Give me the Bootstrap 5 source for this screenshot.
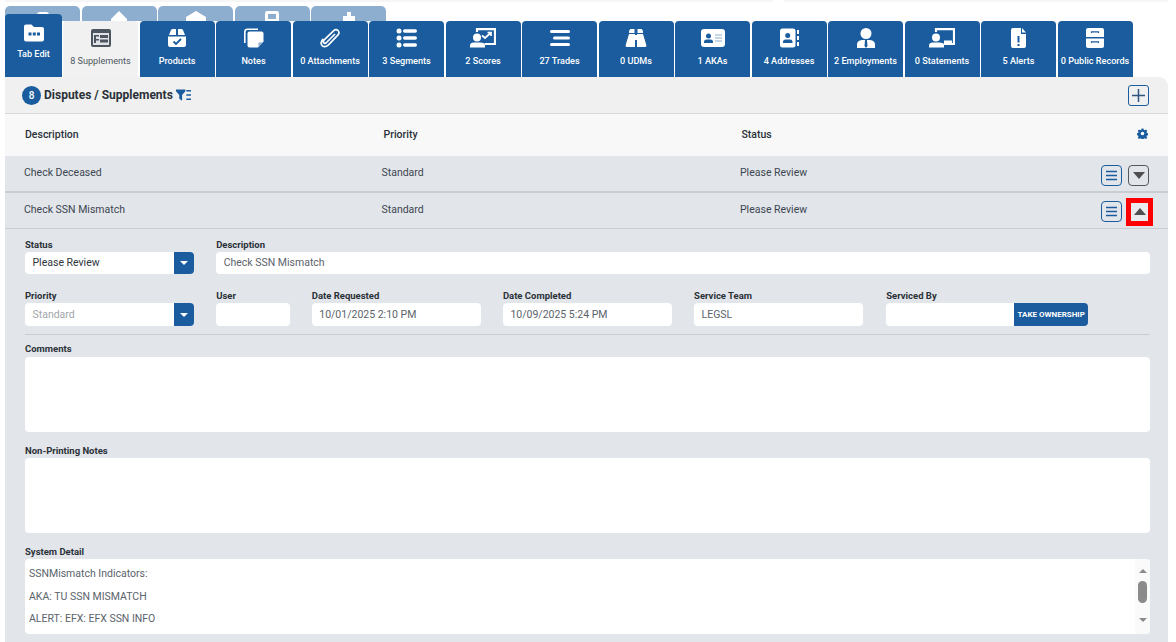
<!DOCTYPE html>
<html lang="en"><head><meta charset="utf-8"><title>Disputes / Supplements</title>
<link href="https://cdn.jsdelivr.net/npm/bootstrap@5.3.0/dist/css/bootstrap.min.css" rel="stylesheet">
<style>
html,body{height:642px;overflow:hidden;background:#fff}
body{font-family:Roboto,"Liberation Sans",sans-serif;font-size:10.5px;color:#3c4650}
.topstrip{height:2px;margin:0 8px 4px 5px;background:linear-gradient(90deg,#f6f6f6 0 66%,#fff 66% 67%,#f6f6f6 67%)}
.backrow{display:flex;gap:1.5px;height:15px;margin-left:5px;overflow:hidden}
.backtab{width:75px;height:30px;background:#8eaecf;border-radius:5px 5px 0 0;display:flex;justify-content:center}
.backtab svg{margin-top:5px;width:20px;height:20px;fill:#fff}
.tabrow{display:flex;gap:1.5px;height:56px;margin-left:5px;align-items:flex-end}
.tabx{width:75px;height:56px;background:#1a5c9e;border-radius:4px 4px 0 0;color:#fff;font-weight:500;font-size:9.1px;line-height:12px;display:flex;flex-direction:column;align-items:center;white-space:nowrap}
.tabx svg{width:22px;height:20px;margin-top:7px;margin-bottom:7px;flex:none}
.tabedit{width:57px;height:63px;margin-right:-.5px}
.tabedit svg{margin-top:9px;margin-bottom:5px}
.tabon{background:#f1f1f1;color:#4d5660;font-weight:400}
.wideico{width:26px!important}
.panel{margin:0 8px 0 5px;background:#e2e5ea;border-top-right-radius:10px;height:570px;overflow:hidden}
.phead{height:37px;background:#f0f0f0;border-bottom:1px solid #d9d9d9;display:flex;align-items:center;padding:0 19px 0 17px;font-size:12px;font-weight:700;color:#2a3138}
.countdot{width:19px;height:19px;border-radius:50%;background:#1a5c9e;color:#fff;font-size:10px;font-weight:500;display:flex;align-items:center;justify-content:center;margin-right:3px}
.filterico{margin-left:3px}
.addbtn{width:21px;height:21px;border:1px solid #1a5c9e;border-radius:3px;margin-left:auto;display:flex;align-items:center;justify-content:center;padding:0;background:transparent}
.thead-x{height:42px;background:#f8f8f8;display:grid;grid-template-columns:358.5px 358px 1fr 11px;align-items:center;padding:0 20px 0 20px;font-weight:500;color:#2a3138;font-size:10.5px}
.gearico{margin-top:-3px}
.rowx{height:36px;display:grid;grid-template-columns:357.500px 358.500px 1fr 48px;align-items:center;padding:0 19px 2px;border-bottom:1px solid #c9ccd0;color:#3c4650}
.rowfirst{height:37px;border-bottom-width:2px}
.acts{display:flex;gap:6px;justify-content:flex-end;align-items:center;margin-top:4px}
.rowfirst .acts{margin-top:5px}
.sq{width:21px;height:21px;border-radius:4px;padding:0;background:transparent;display:flex;align-items:center;justify-content:center}
.sqb{border:1px solid #1a5c9e}
.sqg{border:1px solid #55595e}
.redbox{border:5px solid #f00;border-radius:0;width:27px;height:28px;margin:-3px -4px -3px -2px;background:#e9ebef}
.formx{padding:10px 18px 0 20px}
.formx .row{--bs-gutter-x:22px;--bs-gutter-y:0}
.secondrow{margin-top:16px}
.lab{font-size:9.5px;font-weight:700;color:#2a3138;line-height:11px;height:13px;margin:0;display:block}
.labgap{margin-top:13px}
.labtop{margin-top:-1px;height:14px}
.fld{height:23px;background:#fff;border:0;border-radius:4px;padding:0 7.500px;font-size:10.5px;line-height:23px;color:#5b636b;min-height:0}
.fldone{height:22px;line-height:21px}
.fldtall{height:75px;display:block;resize:none}
.dark{color:#2f363d}.mute{color:#a2a6ab}
.ddb{width:20px;height:100%;background:#1a5c9e;border-radius:0 4px 4px 0;display:flex;align-items:center;justify-content:center;flex:none}
.ddb::after{content:"";border:4px solid transparent;border-top-color:#fff;border-bottom:0}
.ownerwrap{margin-left:1px}
.ownerinput{width:128px;border-radius:4px 0 0 4px}
.takebtn{width:74px;background:#1a5c9e;color:#fff;border:0;border-radius:0 4px 4px 0;font-size:8px;font-weight:700;padding:0;white-space:nowrap;height:23px}
.rulex{height:1px;background:#c9ccd0;margin:8px 0 9px}
.sysbox{height:75px;background:#fff;border-radius:4px;display:flex;overflow:hidden}
.systext{flex:1;padding:4px 4px;font-size:10.5px;color:#5b636b;line-height:22.500px}
.sbar{width:15px;background:#fafafa;display:flex;flex-direction:column;align-items:center;padding-top:10px}
.sbar i{display:block;width:0;border:4.5px solid transparent}
.sup{border-bottom-color:#8a8a8a!important;border-top:0!important}
.sdown{border-top-color:#8a8a8a!important;border-bottom:0!important;margin-top:15px}
.sthumb{width:9px;height:22px;border-radius:5px;background:#8a8a8a;margin-top:8px;flex:none}
</style></head><body>
<div class="topstrip"></div>
<div class="backrow">
<div class="backtab"><svg viewBox="0 0 20 20"><rect x="4" y="1" width="12" height="18" rx="3"/></svg></div>
<div class="backtab"><svg viewBox="0 0 20 20"><path d="M10 0 18 8V20H2V8Z"/></svg></div>
<div class="backtab"><svg viewBox="0 0 20 20"><path d="M10 0 20 6V20H0V6Z"/></svg></div>
<div class="backtab"><svg viewBox="0 0 20 20"><path fill-rule="evenodd" d="M5 0H15Q17 0 17 3V20H3V3Q3 0 5 0ZM6 3V8H14V3Z"/></svg></div>
<div class="backtab"><svg viewBox="0 0 20 20"><path d="M8 1h4v4h4v15H4V5h4Z"/></svg></div>
</div>
<div class="tabrow">
<div class="tabx tabedit"><svg viewBox="0 0 22 20"><path fill="#fff" d="M1 3.500Q1 1.500 3 1.500H8.500L11 4H19Q21 4 21 6V16.500Q21 18.500 19 18.500H3Q1 18.500 1 16.500Z"/><g fill="#1a5c9e"><rect x="5.500" y="9.500" width="3" height="3"/><rect x="9.800" y="9.500" width="3" height="3"/><rect x="14" y="9.500" width="3" height="3"/></g></svg>Tab Edit</div>
<div class="tabx tabon"><svg viewBox="0 0 22 20"><rect x="1" y="1" width="20" height="18" rx="2" fill="#4c5560"/><rect x="3" y="5" width="16" height="12" fill="#dfe3e8"/><path d="M4 7h5v1.500H6V11h3v1.500H6V15H4Z" fill="#4c5560"/><rect x="10" y="7" width="8" height="3" fill="#4c5560"/><rect x="10" y="11.500" width="8" height="3" fill="#4c5560"/></svg>8 Supplements</div>
<div class="tabx"><svg viewBox="0 0 22 20"><path fill="#fff" d="M3 7 5 2Q5.500 1 7 1H10V7ZM12 1H15Q16.500 1 17 2L19 7H12ZM2 8.500H20V17Q20 19 18 19H4Q2 19 2 17Z"/><path d="M7.500 13.500 10 16 15 11" fill="none" stroke="#1a5c9e" stroke-width="1.800"/></svg>Products</div>
<div class="tabx"><svg viewBox="0 0 22 20"><path fill="none" stroke="#fff" stroke-width="1.600" d="M1.800 15V4Q1.800 1.200 4.500 1.200H15"/><path fill="#fff" d="M6.500 3.500H18.500Q20.500 3.500 20.500 5.500V13.500L15 19.500H6.500Q4.500 19.500 4.500 17.500V5.500Q4.500 3.500 6.500 3.500Z"/><path fill="#8eaecf" d="M15.500 19 V14.500H20Z"/></svg>Notes</div>
<div class="tabx"><svg viewBox="0 0 22 20"><path fill="none" stroke="#fff" stroke-width="1.700" stroke-linecap="round" d="M15.500 6.500 7.500 14.500Q5.800 16 4.800 14.800 3.600 13.500 5.200 11.800L14.500 2.800Q17 .6 19 2.500 21 4.800 18.800 7.200L9.500 16.800Q6 20 3.300 17.800.8 15 3.700 11.500"/></svg>0 Attachments</div>
<div class="tabx"><svg viewBox="0 0 22 20"><g fill="#fff"><circle cx="3" cy="3" r="2.500"/><circle cx="3" cy="10" r="2.500"/><circle cx="3" cy="17" r="2.500"/><rect x="7" y="1.300" width="14" height="3.400" rx="1.700"/><rect x="7" y="8.300" width="14" height="3.400" rx="1.700"/><rect x="7" y="15.300" width="14" height="3.400" rx="1.700"/></g></svg>3 Segments</div>
<div class="tabx"><svg class="wideico" viewBox="0 0 26 20"><path fill="none" stroke="#fff" stroke-width="2.200" d="M7 4V1.200H25V16H14.500"/><path fill="none" stroke="#fff" stroke-width="1.700" d="M12 7.500 15 10 20.500 5M17.500 4.500H21V8"/><circle cx="7" cy="9.500" r="4" fill="#fff"/><path fill="#fff" d="M0 19.500V17.500Q0 14.500 4 14.500H10Q15 14.500 15 17.500V19.500Z"/></svg>2 Scores</div>
<div class="tabx"><svg viewBox="0 0 22 20"><g fill="#fff"><rect x="1" y="2" width="20" height="3" rx="1.500"/><rect x="4" y="8.500" width="17" height="3" rx="1.500"/><rect x="1" y="15" width="20" height="3" rx="1.500"/></g></svg>27 Trades</div>
<div class="tabx"><svg viewBox="0 0 22 20"><g fill="#fff"><path d="M4 5Q4 1 6 1H9.500V5ZM12.500 1H16Q18 1 18 5H12.500Z"/><path d="M4 6H10V19H1.500Q.5 19 .7 17Z"/><path d="M12 6H18L21.300 17Q21.500 19 20.500 19H12Z"/><rect x="9" y="7" width="4" height="5"/></g></svg>0 UDMs</div>
<div class="tabx"><svg style="width:24px" viewBox="0 0 24 20"><rect x="0" y="1" width="24" height="18" rx="3" fill="#fff"/><circle cx="7.500" cy="8" r="2.500" fill="#1a5c9e"/><path fill="#1a5c9e" d="M3 15V14Q3 11.500 5.500 11.500H9.500Q12 11.500 12 14V15Z"/><path stroke="#8eaecf" stroke-width="1.200" d="M14 7H21M14 10H21M14 13H21"/></svg>1 AKAs</div>
<div class="tabx"><svg viewBox="0 0 22 20"><rect x="2" y="0.500" width="15.500" height="19" rx="2.500" fill="#fff"/><circle cx="9.700" cy="7.500" r="2.500" fill="#1a5c9e"/><path fill="#1a5c9e" d="M5 15V14Q5 11.500 7.500 11.500H12Q14.500 11.500 14.500 14V15Z"/><path fill="#fff" d="M19 2h2v4h-2ZM19 8h2v4h-2ZM19 14h2v4h-2Z"/></svg>4 Addresses</div>
<div class="tabx"><svg viewBox="0 0 22 20"><circle cx="11" cy="5.500" r="5.500" fill="#fff"/><path fill="#fff" d="M2 20V16.500Q2 12.500 7 12H15Q20 12.500 20 16.500V20Z"/><path fill="#1a5c9e" d="M10 12H12L12.500 18 11 20 9.500 18Z"/></svg>2 Employments</div>
<div class="tabx"><svg class="wideico" viewBox="0 0 26 20"><path fill="none" stroke="#fff" stroke-width="2.200" d="M7 4V1.200H25V16H14.500"/><rect x="15" y="12.500" width="8" height="3" fill="#fff"/><circle cx="7" cy="9.500" r="4" fill="#fff"/><path fill="#fff" d="M0 19.500V17.500Q0 14.500 4 14.500H10Q15 14.500 15 17.500V19.500Z"/></svg>0 Statements</div>
<div class="tabx"><svg viewBox="0 0 22 20"><path fill="#fff" d="M5 0H13V6H18V18Q18 20 16 20H5Q3 20 3 18V2Q3 0 5 0ZM14 0 18 4.500H14Z"/><rect x="9.500" y="8" width="2" height="6.500" fill="#1a5c9e"/><rect x="9.500" y="16" width="2" height="2" fill="#1a5c9e"/></svg>5 Alerts</div>
<div class="tabx"><svg viewBox="0 0 22 20"><path fill="#fff" d="M4 0H18Q20 0 20 2V9H2V2Q2 0 4 0ZM2 10.500H20V18Q20 20 18 20H4Q2 20 2 18Z"/><path d="M7.500 5V3.800H14.500V5M7.500 15V13.800H14.500V15" fill="none" stroke="#1a5c9e" stroke-width="1.200"/></svg>0 Public Records</div>
</div>
<div class="panel">
 <div class="phead"><span class="countdot">8</span>Disputes / Supplements
  <svg class="filterico" width="15" height="12" viewBox="0 0 16 12"><path fill="#1a5c9e" d="M0 0H10V2L6.500 6V12L3.500 10V6L0 2Z"/><path stroke="#1a5c9e" stroke-width="1.700" d="M11 1.500H16M11 6H16M11 10.500H16"/></svg>
  <button class="addbtn" type="button" aria-label="Add"><svg width="13" height="13" viewBox="0 0 13 13"><path stroke="#2f5580" stroke-width="1.500" d="M6.500 0V13M0 6.500H13"/></svg></button>
 </div>
 <div class="thead-x"><span>Description</span><span>Priority</span><span>Status</span>
  <svg class="gearico" width="11" height="11" viewBox="0 0 24 24"><path fill="#1a5c9e" fill-rule="evenodd" d="M10 1h4l.6 3 2.400 1 2.600-1.700 2.800 2.800-1.700 2.600 1 2.300 3 .6v4l-3 .6-1 2.400 1.700 2.600-2.800 2.800-2.600-1.700-2.400 1-.6 3h-4l-.6-3-2.400-1-2.600 1.700-2.800-2.800 1.700-2.600-1-2.400-3-.6v-4l3-.6 1-2.300-1.700-2.600 2.800-2.800 2.600 1.700 2.400-1ZM12 8a4 4 0 1 0 0 8 4 4 0 0 0 0-8Z"/></svg>
 </div>
 <div class="rowx rowfirst"><span>Check Deceased</span><span>Standard</span><span>Please Review</span>
  <div class="acts"><button class="sq sqb" type="button" aria-label="Menu"><svg width="13" height="11" viewBox="0 0 13 11"><path stroke="#1a5c9e" stroke-width="1.300" d="M1 1.500H12M1 5.500H12M1 9.500H12"/></svg></button><button class="sq sqg" type="button" aria-label="Expand"><svg width="12" height="7" viewBox="0 0 12 7"><path fill="#4f4f4f" d="M0 0H12L6 7Z"/></svg></button></div></div>
 <div class="rowx"><span>Check SSN Mismatch</span><span>Standard</span><span>Please Review</span>
  <div class="acts"><button class="sq sqb" type="button" aria-label="Menu"><svg width="13" height="11" viewBox="0 0 13 11"><path stroke="#1a5c9e" stroke-width="1.300" d="M1 1.500H12M1 5.500H12M1 9.500H12"/></svg></button><button class="sq redbox" type="button" aria-label="Collapse"><svg width="12" height="7" viewBox="0 0 12 7"><path fill="#4f4f4f" d="M0 7H12L6 0Z"/></svg></button></div></div>
 <div class="formx">
  <div class="row">
   <div class="col-2"><label class="lab">Status</label><div class="fld fldone d-flex pe-0 dark"><span class="flex-grow-1">Please Review</span><span class="ddb"></span></div></div>
   <div class="col-10"><label class="lab">Description</label><div class="fld fldone">Check SSN Mismatch</div></div>
  </div>
  <div class="row secondrow">
   <div class="col-2"><label class="lab">Priority</label><div class="fld d-flex pe-0 mute"><span class="flex-grow-1">Standard</span><span class="ddb"></span></div></div>
   <div class="col-1"><label class="lab">User</label><div class="fld"></div></div>
   <div class="col-2"><label class="lab">Date Requested</label><div class="fld">10/01/2025 2:10 PM</div></div>
   <div class="col-2"><label class="lab">Date Completed</label><div class="fld">10/09/2025 5:24 PM</div></div>
   <div class="col-2"><label class="lab">Service Team</label><div class="fld">LEGSL</div></div>
   <div class="col-3"><div class="ownerwrap"><label class="lab">Serviced By</label><div class="d-flex"><div class="fld ownerinput"></div><button class="takebtn" type="button">TAKE OWNERSHIP</button></div></div></div>
  </div>
  <div class="rulex"></div>
  <label class="lab labtop">Comments</label><div class="fld fldtall"></div>
  <label class="lab labgap">Non-Printing Notes</label><div class="fld fldtall"></div>
  <label class="lab labgap">System Detail</label>
  <div class="sysbox"><div class="systext">SSNMismatch Indicators:<br>AKA: TU SSN MISMATCH<br>ALERT: EFX: EFX SSN INFO</div><div class="sbar"><i class="sup"></i><span class="sthumb"></span><i class="sdown"></i></div></div>
 </div>
</div>
</body></html>
